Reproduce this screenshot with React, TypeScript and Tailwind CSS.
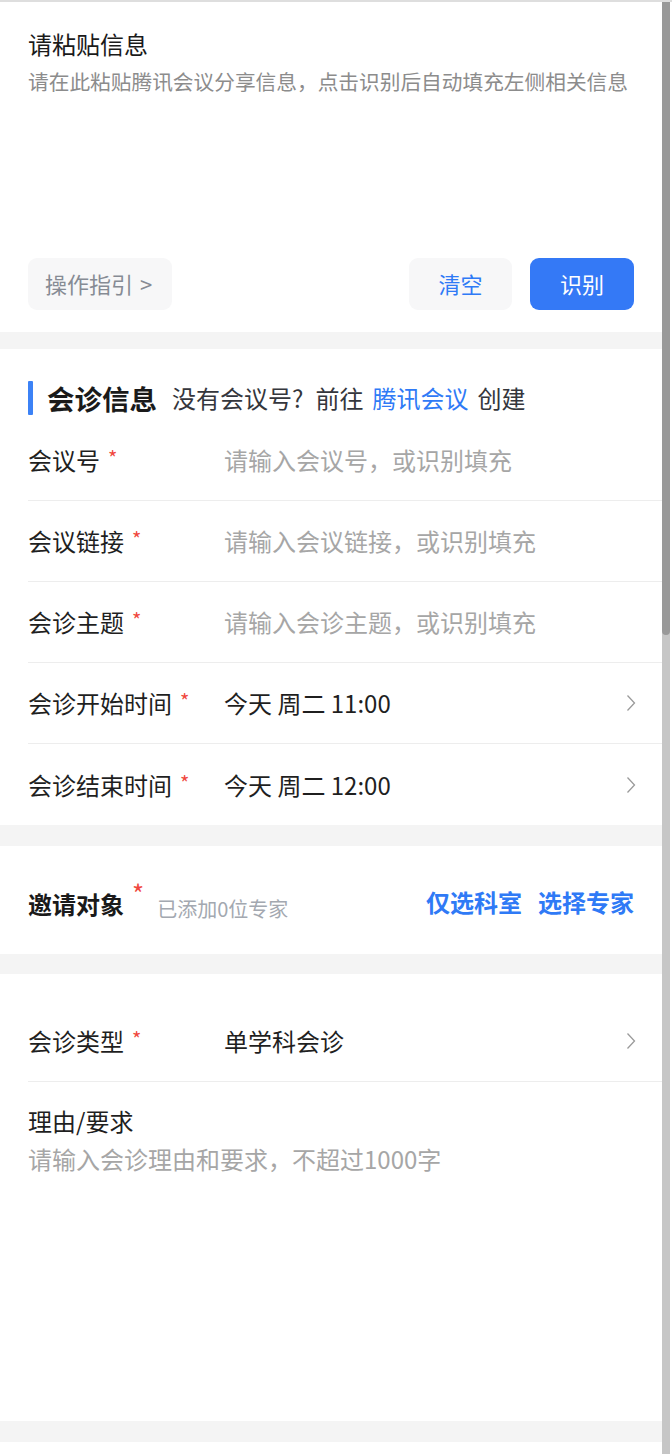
import { useState } from 'react';

type Row = { label: string; value: string; placeholder?: boolean; arrow?: boolean };

const rows: Row[] = [
  { label: '会议号', value: '请输入会议号，或识别填充', placeholder: true },
  { label: '会议链接', value: '请输入会议链接，或识别填充', placeholder: true },
  { label: '会诊主题', value: '请输入会诊主题，或识别填充', placeholder: true },
  { label: '会诊开始时间', value: '今天 周二 11:00', arrow: true },
  { label: '会诊结束时间', value: '今天 周二 12:00', arrow: true },
];

function Chevron() {
  return (
    <svg width="10" height="18" viewBox="0 0 10 18" fill="none" className="shrink-0">
      <polyline points="1.5,1.5 8.5,9 1.5,16.5" stroke="#9a9a9a" strokeWidth="1.3" />
    </svg>
  );
}

function Star() {
  return <span className="ml-[8px] text-[20px] leading-none text-[#f0483e] relative -top-[2px]">*</span>;
}

function FormRow({ row, last }: { row: Row; last?: boolean }) {
  return (
    <div className={`ml-7 h-[81px] flex items-center pr-[26px] ${last ? '' : 'border-b border-[#ededed]'}`}>
      <div className="w-[196px] shrink-0 flex items-center text-[24px] leading-[32px] text-[#1f1f1f]">
        {row.label}
        <Star />
      </div>
      <div className={`flex-1 text-[24px] leading-[32px] ${row.placeholder ? 'text-[#a6a6a6]' : 'text-[#1f1f1f]'}`}>
        {row.value}
      </div>
      {row.arrow && <Chevron />}
    </div>
  );
}

export default function App() {
  const [text] = useState('');

  return (
    <div className="w-[672px] h-[1454px] flex bg-white border-t-2 border-[#dedede] overflow-hidden font-['Noto_Sans_CJK_SC','Noto_Sans',sans-serif]">
      <div className="w-[662px] shrink-0 flex flex-col bg-[#f4f4f4]">
        {/* paste box */}
        <div className="bg-white px-7 pt-[26px] pb-[22px]">
          <div className="text-[24px] leading-[32px] text-[#1a1a1a]">请粘贴信息</div>
          <div className="mt-[6px] text-[20.7px] leading-[30px] text-[#8c8c8c] whitespace-nowrap">
            {text || '请在此粘贴腾讯会议分享信息，点击识别后自动填充左侧相关信息'}
          </div>
          <div className="mt-[162px] flex items-center">
            <button className="h-[52px] w-[144px] rounded-[9px] bg-[#f7f7f8] text-[22px] leading-[30px] text-[#868b94] text-left pl-[17px] pb-[3px]">
              操作指引<span className="ml-[7px]">&gt;</span>
            </button>
            <div className="flex-1" />
            <button className="h-[52px] w-[103px] rounded-[9px] bg-[#f7f7f8] text-[22px] leading-[30px] text-[#2f7af6] pb-[3px]">清空</button>
            <button className="ml-[18px] h-[52px] w-[104px] rounded-[9px] bg-[#3479f6] text-[22px] leading-[30px] text-white pb-[3px]">识别</button>
          </div>
        </div>

        {/* consult info */}
        <div className="mt-[17px] bg-white pt-[32px]">
          <div className="px-7 h-[34px] flex items-center mb-[5px]">
            <div className="w-[5px] h-[34px] bg-[#3c82f6] rounded-[1px]" />
            <div className="ml-[14px] text-[27.5px] leading-[34px] font-bold text-[#1a1a1a]">会诊信息</div>
            <div className="ml-[15px] text-[24px] leading-[34px] text-[#34363c] flex items-center whitespace-nowrap">
              <span>没有会议号?</span>
              <span className="ml-[12px]">前往</span>
              <span className="ml-[9px] text-[#2f7af6]">腾讯会议</span>
              <span className="ml-[9px]">创建</span>
            </div>
          </div>
          {rows.map((r, i) => (
            <FormRow key={r.label} row={r} last={i === rows.length - 1} />
          ))}
        </div>

        {/* invitees */}
        <div className="mt-[21px] bg-white h-[108px] px-7 pt-[8px] flex items-center justify-between">
          <div className="flex items-baseline">
            <span className="text-[24px] leading-[32px] font-bold text-[#1a1a1a]">邀请对象</span>
            <span className="ml-[8px] text-[26px] leading-none text-[#f0483e] relative -top-[10px]">*</span>
            <span className="ml-[13px] text-[20px] leading-[28px] text-[#a3a8b0] relative top-[3px]">已添加0位专家</span>
          </div>
          <div className="flex items-center text-[24px] leading-[32px] font-bold text-[#2f7af6] -mt-[4px]">
            <span>仅选科室</span>
            <span className="ml-[16px]">选择专家</span>
          </div>
        </div>

        {/* type + reason */}
        <div className="mt-[20px] bg-white h-[447px] pt-[27px]">
          <div className="ml-7 h-[81px] flex items-center pr-[26px] border-b border-[#ededed]">
            <div className="w-[196px] shrink-0 flex items-center text-[24px] leading-[32px] text-[#1f1f1f]">
              会诊类型
              <Star />
            </div>
            <div className="flex-1 text-[24px] leading-[32px] text-[#1f1f1f]">单学科会诊</div>
            <Chevron />
          </div>
          <div className="px-7 pt-[23px]">
            <div className="text-[24px] leading-[32px] text-[#1f1f1f]">理由/要求</div>
            <div className="mt-[6px] text-[24px] leading-[32px] text-[#a6a6a6]">请输入会诊理由和要求，不超过1000字</div>
          </div>
        </div>

        <div className="mt-[21px] flex-1 bg-white" />
      </div>

      {/* scrollbar */}
      <div className="w-[8px] shrink-0 flex flex-col bg-[#c6c6c6]">
        <div className="h-[633px] bg-[#999999] rounded-b-[4px]" />
      </div>
      <div className="flex-1 bg-white" />
    </div>
  );
}
